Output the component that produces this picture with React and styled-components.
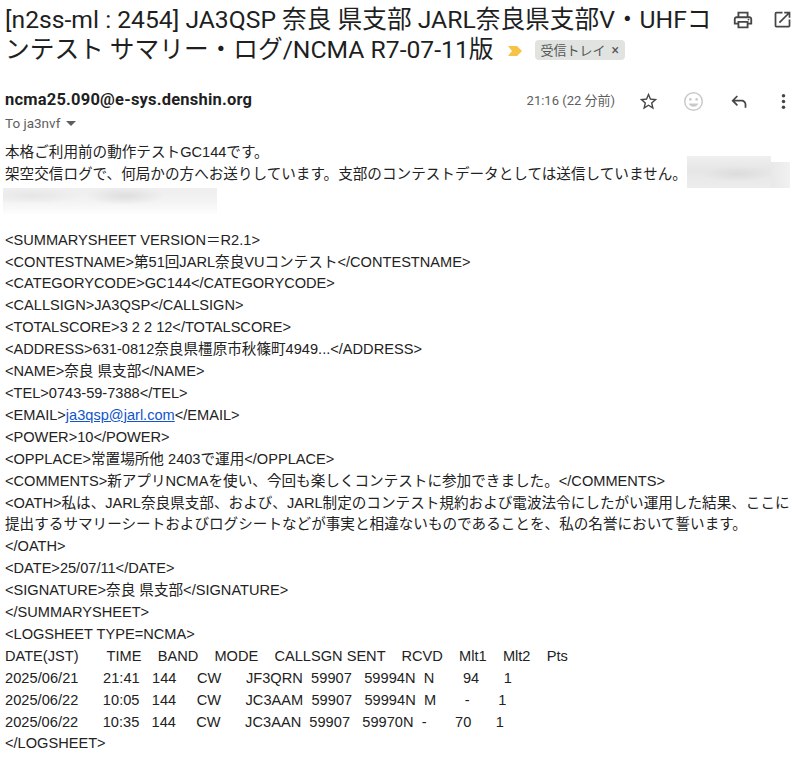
import React from "react";
import styled, { createGlobalStyle } from "styled-components";

const Global = createGlobalStyle`
  html, body { margin: 0; padding: 0; background: #fff; }
`;

const Page = styled.div`
  width: 799px;
  height: 759px;
  overflow: hidden;
  position: relative;
`;

const Subject = styled.div`
  display: flex;
  justify-content: space-between;
  padding: 5px 6px 0 5px;
  height: 90px;
  box-sizing: border-box;
`;

const Title = styled.h1`
  margin: 0;
  width: 708px;
  flex: none;
  font: 400 24.7px/30px Roboto, "Noto Sans CJK JP", sans-serif;
  color: #1f1f1f;
`;

const Arrow = styled.svg`
  width: 16px;
  height: 12px;
  margin: 0 12px 0 14px;
  vertical-align: 1px;
`;

const Label = styled.span`
  display: inline-flex;
  align-items: center;
  gap: 6px;
  height: 20px;
  padding: 0 6px 0 5px;
  background: #e1e3e1;
  border-radius: 4px;
  font: 400 13px/16px "Noto Sans CJK JP", sans-serif;
  color: #555;
  vertical-align: 3px;
`;

const LabelClose = styled.span`
  font: 400 14px/14px Roboto, sans-serif;
`;

const TopIcons = styled.div`
  display: flex;
  gap: 18px;
  padding-top: 4px;
`;

const Icon = styled.svg`
  width: ${(p) => p.$size || 21}px;
  height: ${(p) => p.$size || 21}px;
  fill: ${(p) => p.$color || "#444746"};
  display: block;
`;

const Meta = styled.div`
  display: flex;
  justify-content: space-between;
  height: 52px;
  padding: 0 5px;
  box-sizing: border-box;
`;

const Sender = styled.div`
  font: 700 16.5px/20px Roboto, sans-serif;
  color: #1f1f1f;
  letter-spacing: 0.2px;
`;

const Recipient = styled.div`
  display: flex;
  align-items: center;
  font: 400 13.5px/18px Roboto, sans-serif;
  color: #5e5e5e;
  margin-top: 4px;
`;

const Caret = styled.span`
  width: 0;
  height: 0;
  margin-left: 6px;
  border: 5px solid transparent;
  border-top: 5px solid #5e5e5e;
  border-bottom: 0;
`;

const Actions = styled.div`
  display: flex;
  align-items: center;
  height: 20px;
  margin-top: 1px;
`;

const Time = styled.span`
  font: 400 13px/20px Roboto, "Noto Sans CJK JP", sans-serif;
  color: #5e5e5e;
  margin-right: 23px;
`;

const ActionIcons = styled.div`
  display: flex;
  gap: 24px;
  align-items: center;
`;

const Body = styled.div`
  padding: 0 5px;
  font: 400 14.6px/21.92px "Liberation Sans", "Noto Sans CJK JP", sans-serif;
  color: #222;
`;

const Line = styled.div`
  white-space: pre;
  height: 21.92px;
`;

const LogLine = styled(Line)`
  letter-spacing: ${(p) => p.$track}px;
`;

// blurred-out part of the message, laid over the text
const Smudge = styled.div`
  position: absolute;
  left: ${(p) => p.$x}px;
  top: ${(p) => p.$y}px;
  width: ${(p) => p.$w}px;
  height: ${(p) => p.$h}px;
  background: ${(p) => p.$bg};
`;

const MailLink = styled.a`
  color: #1155cc;
  text-decoration: underline;
`;

const lines = [
  "<SUMMARYSHEET VERSION＝R2.1>",
  "<CONTESTNAME>第51回JARL奈良VUコンテスト</CONTESTNAME>",
  "<CATEGORYCODE>GC144</CATEGORYCODE>",
  "<CALLSIGN>JA3QSP</CALLSIGN>",
  "<TOTALSCORE>3 2 2 12</TOTALSCORE>",
  "<ADDRESS>631-0812奈良県橿原市秋篠町4949...</ADDRESS>",
  "<NAME>奈良 県支部</NAME>",
  "<TEL>0743-59-7388</TEL>",
];

const rest = [
  "<POWER>10</POWER>",
  "<OPPLACE>常置場所他 2403で運用</OPPLACE>",
  "<COMMENTS>新アプリNCMAを使い、今回も楽しくコンテストに参加できました。</COMMENTS>",
  "<OATH>私は、JARL奈良県支部、および、JARL制定のコンテスト規約および電波法令にしたがい運用した結果、ここに",
  "提出するサマリーシートおよびログシートなどが事実と相違ないものであることを、私の名誉において誓います。",
  "</OATH>",
  "<DATE>25/07/11</DATE>",
  "<SIGNATURE>奈良 県支部</SIGNATURE>",
  "</SUMMARYSHEET>",
  "<LOGSHEET TYPE=NCMA>",
];

const log = [
  ["DATE(JST)       TIME    BAND    MODE    CALLSGN SENT    RCVD    Mlt1    Mlt2    Pts", 0],
  ["2025/06/21      21:41   144     CW      JF3QRN  59907   59994N  N       94      1", 0.04],
  ["2025/06/22      10:05   144     CW      JC3AAM  59907   59994N  M       -       1", 0.03],
  ["2025/06/22      10:35   144     CW      JC3AAN  59907   59970N  -       70      1", 0.02],
];

export default function App() {
  return (
    <Page>
      <Global />
      <Subject>
        <Title>
          [n2ss-ml : 2454] JA3QSP 奈良 県支部 JARL奈良県支部V・UHFコンテスト サマリー・ログ/NCMA R7-07-11版
          <Arrow viewBox="0 0 16 12">
            <path d="M1 1h9l5 5-5 5H1l4-5z" fill="#f6c344" />
          </Arrow>
          <Label>
            受信トレイ<LabelClose>×</LabelClose>
          </Label>
        </Title>
        <TopIcons>
          <Icon viewBox="0 0 24 24" $size={22}>
            <path d="M19 8h-1V3H6v5H5c-1.66 0-3 1.34-3 3v6h4v4h12v-4h4v-6c0-1.66-1.34-3-3-3zM8 5h8v3H8V5zm8 14H8v-4h8v4zm4-4h-2v-2H6v2H4v-4c0-.55.45-1 1-1h14c.55 0 1 .45 1 1v4z" />
            <circle cx="18" cy="11.5" r="1" />
          </Icon>
          <Icon viewBox="0 0 24 24">
            <path d="M19 19H5V5h7V3H5a2 2 0 0 0-2 2v14a2 2 0 0 0 2 2h14c1.1 0 2-.9 2-2v-7h-2v7zM14 3v2h3.59l-9.83 9.83 1.41 1.41L19 6.41V10h2V3h-7z" />
          </Icon>
        </TopIcons>
      </Subject>
      <Meta>
        <div>
          <Sender>ncma25.090@e-sys.denshin.org</Sender>
          <Recipient>
            To ja3nvf
            <Caret />
          </Recipient>
        </div>
        <Actions>
          <Time>21:16 (22 分前)</Time>
          <ActionIcons>
            <Icon viewBox="0 0 24 24">
              <path d="M22 9.24l-7.19-.62L12 2 9.19 8.63 2 9.24l5.46 4.73L5.82 21 12 17.27 18.18 21l-1.63-7.03L22 9.24zM12 15.4l-3.76 2.27 1-4.28-3.32-2.88 4.38-.38L12 6.1l1.71 4.04 4.38.38-3.32 2.88 1 4.28L12 15.4z" />
            </Icon>
            <Icon viewBox="1 1 22 22" $color="#c9cbca">
              <path d="M12 2a10 10 0 1 0 0 20 10 10 0 0 0 0-20zm0 18.4a8.4 8.4 0 1 1 0-16.8 8.4 8.4 0 0 1 0 16.8z" />
              <circle cx="8.7" cy="9.8" r="1.4" />
              <circle cx="15.3" cy="9.8" r="1.4" />
              <path d="M12 17.5c2.3 0 4.3-1.4 5.1-3.5H6.9c.8 2.1 2.8 3.5 5.1 3.5z" />
            </Icon>
            <Icon viewBox="0 0 24 24">
              <path d="M21 19v-3.5C21 12.4 18.6 10 15.5 10H7.8l3.6-3.6L10 5l-6 6 6 6 1.4-1.4L7.8 12h7.7c2 0 3.5 1.5 3.5 3.5V19h2z" />
            </Icon>
            <Icon viewBox="0 0 24 24">
              <circle cx="12" cy="5.5" r="2" />
              <circle cx="12" cy="12" r="2" />
              <circle cx="12" cy="18.5" r="2" />
            </Icon>
          </ActionIcons>
        </Actions>
      </Meta>
      <Body>
        <Line>本格ご利用前の動作テストGC144です。</Line>
        <Line>架空交信ログで、何局かの方へお送りしています。支部のコンテストデータとしては送信していません。</Line>
        <Line />
        <Line />
        {lines.map((l) => (
          <Line key={l}>{l}</Line>
        ))}
        <Line>
          {"<EMAIL>"}
          <MailLink href="#">ja3qsp@jarl.com</MailLink>
          {"</EMAIL>"}
        </Line>
        {rest.map((l) => (
          <Line key={l}>{l}</Line>
        ))}
        {log.map(([l, track]) => (
          <LogLine key={l} $track={track}>
            {l}
          </LogLine>
        ))}
        <Line>{"</LOGSHEET>"}</Line>
      </Body>
      <Smudge
        $x={771}
        $y={162}
        $w={19}
        $h={26}
        $bg="linear-gradient(90deg, #e8e8e8, #f1f1f1)"
      />
      <Smudge
        $x={687}
        $y={156}
        $w={84}
        $h={32}
        $bg="radial-gradient(ellipse 34px 8px at 60% 56%, #dcdcdc, transparent), linear-gradient(180deg, #efefef, #e6e6e6 45%, #ededed)"
      />
      <Smudge
        $x={3}
        $y={188}
        $w={214}
        $h={26}
        $bg="radial-gradient(ellipse 40px 9px at 57% 30%, #dedede, transparent), radial-gradient(ellipse 50px 8px at 14% 30%, #e6e6e6, transparent), linear-gradient(180deg, #eeeeee, #f3f3f3 50%, #fdfdfd)"
      />
    </Page>
  );
}
